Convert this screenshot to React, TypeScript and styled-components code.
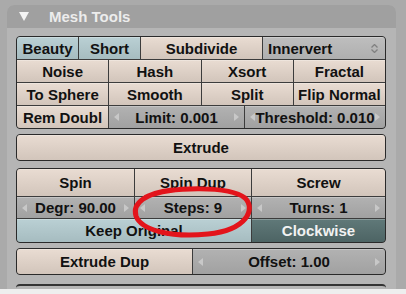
import styled, { createGlobalStyle } from 'styled-components'

const GlobalStyle = createGlobalStyle`
  html, body { margin: 0; padding: 0; background: #aaaaaa; }
  body { font-family: "Liberation Sans", Arial, sans-serif; }
`

type Kind = 'action' | 'toggle' | 'on' | 'num' | 'menu'

const fills: Record<Kind, string> = {
  action: 'linear-gradient(#e9dcd2, #d2c5bb)',
  toggle: 'linear-gradient(#bad0d4, #a6bcc0)',
  on: 'linear-gradient(#607979, #4d6464)',
  num: 'linear-gradient(#b2b2b2, #a1a1a1)',
  menu: 'linear-gradient(#bebebe, #afafaf)',
}

const Page = styled.div`
  position: relative;
  width: 406px;
  height: 294px;
  overflow: hidden;
  display: flex;
  flex-direction: column;
  background: #aaaaaa;
`

const Panel = styled.div`
  margin: 5px 10px 0 7px;
  flex: 1;
  display: flex;
  flex-direction: column;
  background: #b5b5b5;
  border-radius: 7px 7px 0 0;
  overflow: hidden;
`

const Header = styled.div`
  height: 25px;
  display: flex;
  align-items: center;
  padding-left: 12px;
  background: #a0a0a0;
  color: #ececec;
  font-size: 15px;
  font-weight: bold;
`

const Title = styled.span`
  margin-left: 20px;
`

const Body = styled.div`
  display: flex;
  flex-direction: column;
  padding: 8px 0 0 9px;
`

const Block = styled.div<{ $top?: number }>`
  width: 368px;
  margin-top: ${p => p.$top ?? 0}px;
  display: flex;
  flex-direction: column;
  gap: 1px;
  background: #3c3c3c;
  border: 1px solid #2a2a2a;
  border-radius: 4px;
  overflow: hidden;
`

const Row = styled.div<{ $h: number }>`
  height: ${p => p.$h}px;
  display: flex;
  gap: 1px;
`

const Btn = styled.div<{ $kind?: Kind; $w?: number }>`
  flex: ${p => (p.$w ? `0 0 ${p.$w}px` : '1 1 0')};
  min-width: 0;
  display: flex;
  align-items: center;
  background: ${p => fills[p.$kind ?? 'action']};
  box-shadow: inset 0 1px rgba(255, 255, 255, 0.25);
  color: ${p => (p.$kind === 'on' ? '#f2f2f2' : '#111111')};
  font-size: 15px;
  font-weight: bold;
  white-space: nowrap;
  overflow: hidden;
`

const Label = styled.span<{ $left?: boolean }>`
  flex: 1;
  text-align: ${p => (p.$left ? 'left' : 'center')};
  padding-left: ${p => (p.$left ? 5 : 0)}px;
`

const Cutoff = styled.div`
  width: 370px;
  height: 3px;
  margin-top: 9px;
  border-top: 2px solid #333333;
  border-radius: 4px 4px 0 0;
`

const Footer = styled.div`
  height: 5px;
  background: #eeeeee;
`

const Overlay = styled.svg`
  position: absolute;
  left: 0;
  top: 0;
  pointer-events: none;
`

function Arrow({ dir }: { dir: 'l' | 'r' }) {
  return (
    <svg width="5" height="8" viewBox="0 0 5 8" style={{ margin: dir === 'l' ? '0 0 0 5px' : '0 5px 0 0', flex: 'none' }}>
      <path d={dir === 'l' ? 'M5 0 L0 4 L5 8 Z' : 'M0 0 L5 4 L0 8 Z'} fill="#c8c8c8" />
    </svg>
  )
}

function Num({ text, w }: { text: string; w?: number }) {
  return (
    <Btn $kind="num" $w={w}>
      <Arrow dir="l" />
      <Label>{text}</Label>
      <Arrow dir="r" />
    </Btn>
  )
}

export default function App() {
  return (
    <Page>
      <GlobalStyle />
      <Panel>
        <Header>
          <svg width="10" height="9" viewBox="0 0 10 9"><path d="M0 0 H10 L5 9 Z" fill="#f4f4f4" /></svg>
          <Title>Mesh Tools</Title>
        </Header>
        <Body>
          <Block>
            <Row $h={22}>
              <Btn $kind="toggle" $w={61}><Label>Beauty</Label></Btn>
              <Btn $kind="toggle" $w={61}><Label>Short</Label></Btn>
              <Btn $w={121}><Label>Subdivide</Label></Btn>
              <Btn $kind="menu">
                <Label $left>Innervert</Label>
                <svg width="7" height="9" viewBox="0 0 7 9" style={{ marginRight: 7 }}>
                  <path d="M0.5 3.5 L3.5 0.5 L6.5 3.5 M0.5 5.5 L3.5 8.5 L6.5 5.5" stroke="#808080" strokeWidth="1.3" fill="none" />
                </svg>
              </Btn>
            </Row>
            <Row $h={22}>
              <Btn><Label>Noise</Label></Btn>
              <Btn><Label>Hash</Label></Btn>
              <Btn><Label>Xsort</Label></Btn>
              <Btn><Label>Fractal</Label></Btn>
            </Row>
            <Row $h={22}>
              <Btn><Label>To Sphere</Label></Btn>
              <Btn><Label>Smooth</Label></Btn>
              <Btn><Label>Split</Label></Btn>
              <Btn><Label>Flip Normal</Label></Btn>
            </Row>
            <Row $h={22}>
              <Btn $w={91}><Label>Rem Doubl</Label></Btn>
              <Num text="Limit: 0.001" w={135} />
              <Num text="Threshold: 0.010" />
            </Row>
          </Block>

          <Block $top={5}>
            <Row $h={25}>
              <Btn><Label>Extrude</Label></Btn>
            </Row>
          </Block>

          <Block $top={7}>
            <Row $h={27}>
              <Btn $w={117}><Label>Spin</Label></Btn>
              <Btn $w={116}><Label>Spin Dup</Label></Btn>
              <Btn><Label>Screw</Label></Btn>
            </Row>
            <Row $h={21}>
              <Num text="Degr: 90.00" w={117} />
              <Num text="Steps: 9" w={116} />
              <Num text="Turns: 1" />
            </Row>
            <Row $h={23}>
              <Btn $kind="toggle" $w={234}><Label>Keep Original</Label></Btn>
              <Btn $kind="on"><Label>Clockwise</Label></Btn>
            </Row>
          </Block>

          <Block $top={5}>
            <Row $h={25}>
              <Btn $w={175}><Label>Extrude Dup</Label></Btn>
              <Num text="Offset: 1.00" />
            </Row>
          </Block>

          <Cutoff />
        </Body>
      </Panel>
      <Footer />

      <Overlay width="406" height="294" viewBox="0 0 406 294">
        <path
          d="M146 197 C172 186, 230 186, 245 198 C256 209, 247 230, 208 234 C171 238, 141 230, 136 216 C132 203, 146 193, 172 190"
          stroke="#e3141b"
          strokeWidth="5"
          strokeLinecap="round"
          fill="none"
        />
      </Overlay>
    </Page>
  )
}
